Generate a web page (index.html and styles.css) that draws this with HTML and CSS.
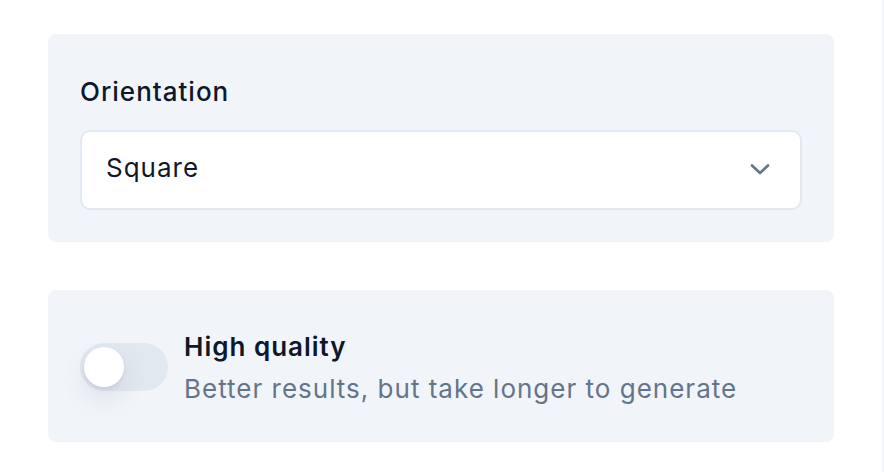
FILE: index.html
```html
<!DOCTYPE html>
<html lang="en">
<head>
    <meta charset="UTF-8">
    <meta name="viewport" content="width=device-width, initial-scale=1.0">
    <title>Generate settings</title>
    <link rel="stylesheet" href="styles.css">
</head>
<body>
    <div class="panel">
        <div class="card">
            <label class="field-label" for="orientation">Orientation</label>
            <div class="select" id="orientation">
                <span class="select-value">Square</span>
                <svg class="chevron" width="20" height="11" viewBox="0 0 20 11">
                    <polyline points="2,1.5 10,9 18,1.5" fill="none" stroke="#64748b" stroke-width="2.6" stroke-linecap="round" stroke-linejoin="round"/>
                </svg>
            </div>
        </div>

        <div class="card card-row">
            <div class="toggle">
                <span class="toggle-knob"></span>
            </div>
            <div class="toggle-text">
                <div class="toggle-title">High quality</div>
                <div class="toggle-desc">Better results, but take longer to generate</div>
            </div>
        </div>
    </div>
</body>
</html>
```

FILE: styles.css
```css
body {
    margin: 0;
    font-family: 'Inter', 'Noto Sans', sans-serif;
    letter-spacing: 1px;
    background-color: #fff;
    color: #0f172a;
}

.panel {
    width: 884px;
    min-height: 472px;
    box-sizing: border-box;
    padding: 34px 48px 0 48px;
    border-right: 2px solid #f1f5f9;
    display: flex;
    flex-direction: column;
    gap: 48px;
}

.card {
    background-color: #f1f5f9;
    border-radius: 8px;
    padding: 40px 32px 32px;
}

.field-label {
    display: block;
    font-size: 26px;
    font-weight: 500;
    line-height: 36px;
    margin-bottom: 20px;
}

.select {
    height: 80px;
    box-sizing: border-box;
    background-color: #fff;
    border: 2px solid #e2e8f0;
    border-radius: 10px;
    padding: 0 30px 0 24px;
    display: flex;
    align-items: center;
    justify-content: space-between;
}

.select-value {
    font-size: 26px;
    line-height: 32px;
    margin-bottom: 4px;
}

.chevron {
    display: block;
    margin-bottom: 2px;
}

.card-row {
    display: flex;
    align-items: center;
    gap: 16px;
    padding: 38px 32px 37px;
}

.toggle {
    width: 88px;
    height: 48px;
    flex-shrink: 0;
    border-radius: 24px;
    background-color: #e2e8f0;
    padding: 4px;
    box-sizing: border-box;
}

.toggle-knob {
    display: block;
    width: 40px;
    height: 40px;
    border-radius: 50%;
    background-color: #fff;
    box-shadow: 0 12px 22px 2px rgba(100, 116, 139, 0.12), 0 2px 4px rgba(100, 116, 139, 0.12);
}

.toggle-text {
    padding-top: 3px;
}

.toggle-title {
    font-size: 26px;
    font-weight: 600;
    line-height: 32px;
    margin-bottom: 10px;
}

.toggle-desc {
    font-size: 26px;
    line-height: 32px;
    color: #64748b;
}
```
